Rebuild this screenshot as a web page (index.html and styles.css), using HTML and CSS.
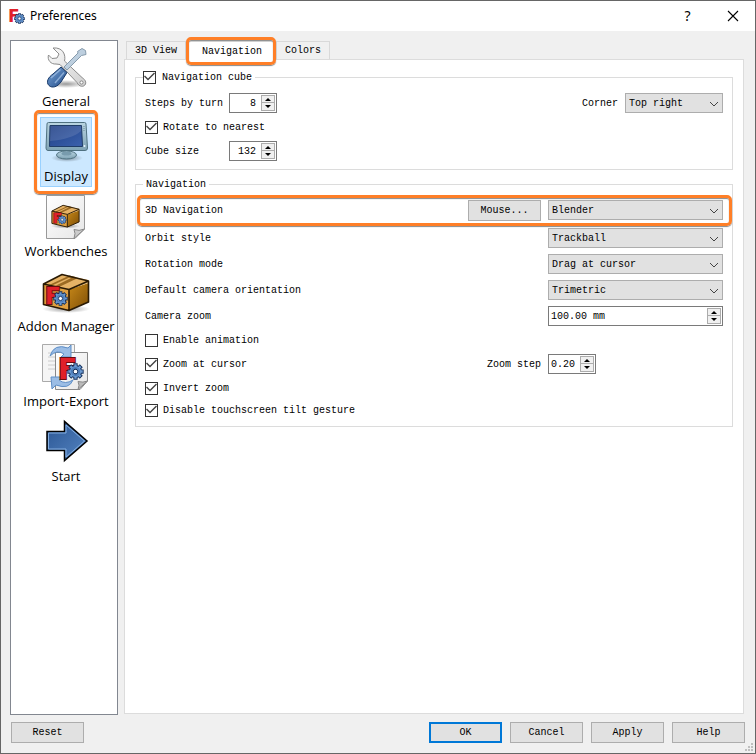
FILE: index.html
```html
<!DOCTYPE html>
<html lang="en">
<head>
<meta charset="utf-8">
<title>Preferences</title>
<link rel="stylesheet" href="styles.css">
</head>
<body>
<svg class="defs" aria-hidden="true">
  <defs>
    <linearGradient id="blue" x1="0" y1="0" x2="1" y2="1"><stop offset="0" stop-color="#7ba6d8"/><stop offset="1" stop-color="#204a87"/></linearGradient>
    <linearGradient id="arrow" x1="0" y1="0" x2="1" y2="1"><stop offset="0" stop-color="#2a5593"/><stop offset="1" stop-color="#5585c2"/></linearGradient>
    <linearGradient id="screen" x1="0" y1="0" x2="1" y2="1"><stop offset="0" stop-color="#1f3f86"/><stop offset="1" stop-color="#3c62ad"/></linearGradient>
    <linearGradient id="steel" x1="0" y1="0" x2="1" y2="1"><stop offset="0" stop-color="#fafafa"/><stop offset="1" stop-color="#cfcfcf"/></linearGradient>
    <linearGradient id="frame" x1="0" y1="0" x2="0" y2="1"><stop offset="0" stop-color="#b9d5e2"/><stop offset="1" stop-color="#7fa3b4"/></linearGradient>
    <linearGradient id="wood" x1="0" y1="0" x2="1" y2="1"><stop offset="0" stop-color="#c98a1a"/><stop offset="1" stop-color="#7d4d05"/></linearGradient>
    <linearGradient id="page" x1="0" y1="0" x2="1" y2="1"><stop offset="0" stop-color="#ffffff"/><stop offset="1" stop-color="#e6e6e6"/></linearGradient>
    <radialGradient id="shade"><stop offset="0" stop-color="#000" stop-opacity=".4"/><stop offset="1" stop-color="#000" stop-opacity="0"/></radialGradient>
    <symbol id="gear" viewBox="-10 -10 20 20">
      <g stroke="#14305c" stroke-width="5"><path d="M0-9.6V9.6M-9.6 0H9.6M-6.8-6.8 6.8 6.8M-6.8 6.8 6.8-6.8"/></g>
      <circle r="7.6" fill="#14305c"/>
      <g stroke="#6c9bd2" stroke-width="2.8"><path d="M0-8.5V8.5M-8.5 0H8.5M-6-6 6 6M-6 6 6-6"/></g>
      <circle r="6.5" fill="#6c9bd2"/><circle r="4.6" fill="none" stroke="#4a7cba" stroke-width="1.6"/>
      <circle r="2.8" fill="#fff" stroke="#14305c" stroke-width="1.2"/>
    </symbol>
    <symbol id="crate" viewBox="0 0 48 40">
      <ellipse cx="24" cy="36" rx="24" ry="4" fill="url(#shade)"/>
      <path d="M1.500 11 27 16.500V37.500L1.500 31.500Z" fill="#e0a040"/>
      <path d="M27 16.500 46.500 10V29L27 37.500Z" fill="url(#wood)"/>
      <path d="M1.500 11 20 1.500 46.500 7V10L27 16.500Z" fill="#e6b366"/>
      <path d="M8 12.500 27.500 3.500 32 4.500 13 14M15 14 34 5" fill="none" stroke="#9b6a22" stroke-width="1.800"/>
      <path d="M1.500 11 20 1.500 46.500 8V29L27 37.500 1.500 31.500ZM1.500 11 27 16.500V37.500M27 16.500 46.500 8" fill="none" stroke="#2a1a04" stroke-width="1.600" stroke-linejoin="round"/>
      <text class="logo-f" x="3" y="31" font-size="23">F</text>
      <use href="#gear" x="11" y="18" width="15" height="15"/>
    </symbol>
  </defs>
</svg>

<header class="titlebar">
  <svg class="app-icon" viewBox="0 0 16 16" aria-hidden="true">
    <text class="logo-f" x="-1" y="14" font-size="17">F</text>
    <use href="#gear" x="5" y="5" width="11" height="11"/>
  </svg>
  <h1>Preferences</h1>
  <button class="caption help" type="button" aria-label="Context help">?</button>
  <button class="caption" type="button" aria-label="Close"><svg viewBox="0 0 12 12" width="12" height="12"><path d="M1 1 11 11M11 1 1 11" stroke="#000" stroke-width="1.100"/></svg></button>
</header>

<main class="content">
  <nav class="sidebar">
    <button class="category" type="button">
      <svg viewBox="0 0 48 48" aria-hidden="true">
        <ellipse cx="24" cy="40" rx="20" ry="4" fill="url(#shade)"/>
        <path d="M11 4 17 10 15 14 10 14.500 6.500 11C5 16 9 20.500 14 20L18 20.500 35 38.500C37 43 42 43.500 43.500 40 44.500 37 42 35 40 33.500L22.500 17C24 11 21 3 11 4Z" fill="url(#steel)" stroke="#8b8b8b"/>
        <circle cx="39.500" cy="38.500" r="1.600" fill="#fff" stroke="#888"/>
        <path d="M22 23 36 9 35.500 7.500 40 4.500 43.500 6.500 44 10.500 39.500 11.500 25 26Z" fill="#bdcfdf" stroke="#879bac"/>
        <path d="M19 23 25 28.500 19 38C15.500 43 10 44.500 7 41.500 3.500 38 6.500 33 11 30Z" fill="url(#blue)" stroke="#173868"/>
        <path d="M18.500 25.500 9 34M22 28.500 13 39" stroke="#a7c5e8" stroke-width="1.500" opacity=".7"/>
      </svg>
      <span>General</span>
    </button>
    <button class="category selected" type="button" aria-current="true">
      <svg viewBox="0 0 48 48" aria-hidden="true">
        <ellipse cx="25" cy="39" rx="16" ry="4" fill="url(#shade)"/>
        <path d="M20 31H29L30 36H19Z" fill="#789bad"/>
        <ellipse cx="24.500" cy="36" rx="10" ry="4" fill="url(#frame)" stroke="#4f7180"/>
        <ellipse cx="24.500" cy="34.500" rx="5" ry="2" fill="#789bad"/>
        <path d="M6.500 3.500H42.500Q44 3.500 44 5L45.500 29Q45.500 31.500 43 31.500H6Q4 31.500 4 29L5 5Q5 3.500 6.500 3.500Z" fill="url(#frame)" stroke="#4f7180"/>
        <path d="M8 6.500H39.500L40.500 27.500H7.500Z" fill="url(#screen)" stroke="#203d68"/>
        <path d="M8.500 7H39V12Q30 20 8 22Z" fill="#fff" opacity=".12"/>
        <path d="M42 7V13" stroke="#6f8c99" stroke-dasharray="1 1"/><circle cx="42.500" cy="27" r="1" fill="#e8f6ff"/>
      </svg>
      <span>Display</span>
    </button>
    <button class="category" type="button">
      <svg viewBox="0 0 48 48" aria-hidden="true">
        <path d="M4.500 1.500H42.500V35L33 44.500H4.500Z" fill="url(#page)" stroke="#999"/>
        <path d="M42.500 35 32 44.500Q34 39 32 35.500 37 37.500 42.500 35Z" fill="#ccc" stroke="#888"/>
        <use href="#crate" x="9" y="10" width="29" height="25"/>
      </svg>
      <span>Workbenches</span>
    </button>
    <button class="category" type="button">
      <svg viewBox="0 0 48 48" aria-hidden="true"><use href="#crate" x="0" y="4" width="48" height="40"/></svg>
      <span>Addon Manager</span>
    </button>
    <button class="category" type="button">
      <svg viewBox="0 0 48 48" aria-hidden="true">
        <path d="M.500.500H32.500V37.500H.500Z" fill="#f5f5f5" stroke="#aaa"/>
        <path d="M6 9H13M6 13H13M6 17H13M6 21H13M6 25H13" stroke="#ccc"/>
        <path d="M13.500 8.500H45.500V37L38 45.500H13.500Z" fill="url(#page)" stroke="#888"/>
        <path d="M45.500 37 36 45.500Q38 41 36 37.500 41 39 45.500 37Z" fill="#bbb" stroke="#888"/>
        <path d="M8 12Q12-1 26 4L29 1V13H19L22 10Q15 5 8 12Z" fill="#9bbde5" stroke="#5f8fc7"/>
        <path d="M9 33H20L17 36Q23 41 31 36Q27 46 14 41L10 45Z" fill="#9bbde5" stroke="#5f8fc7"/>
        <text class="logo-f" x="16" y="35" font-size="28">F</text>
        <use href="#gear" x="25" y="19" width="17" height="17"/>
      </svg>
      <span>Import-Export</span>
    </button>
    <button class="category" type="button">
      <svg viewBox="0 0 48 48" aria-hidden="true">
        <path d="M5 12.500H22.500V2.500L45 22 22.500 41.500V31.500H5Z" fill="url(#arrow)" stroke="#000" stroke-width="1.500"/>
        <path d="M6.500 14H24V6L42.500 22 24 38V30H6.500Z" fill="none" stroke="#84aee0"/>
      </svg>
      <span>Start</span>
    </button>
  </nav>

  <section class="tabs">
    <div class="tablist" role="tablist">
      <button class="tab" type="button" role="tab" aria-selected="false">3D View</button>
      <button class="tab active" type="button" role="tab" aria-selected="true">Navigation</button>
      <button class="tab" type="button" role="tab" aria-selected="false">Colors</button>
    </div>
    <form class="pane" role="tabpanel">
      <fieldset>
        <legend class="check-legend"><label class="check"><input type="checkbox" checked>Navigation cube</label></legend>
        <div class="rows">
          <div class="row split">
            <div class="pair">
              <label class="caption-label" for="steps">Steps by turn</label>
              <div class="spin right"><input id="steps" type="text" value="8"><button type="button" aria-label="Increase steps"></button><button type="button" aria-label="Decrease steps"></button></div>
            </div>
            <div class="pair end">
              <label for="corner">Corner</label>
              <div class="combo corner"><select id="corner"><option>Top right</option></select><svg viewBox="0 0 10 6"><path d="M1 1 5 5 9 1"/></svg></div>
            </div>
          </div>
          <div class="row"><label class="check"><input type="checkbox" checked>Rotate to nearest</label></div>
          <div class="row pair">
            <label class="caption-label" for="cube">Cube size</label>
            <div class="spin right"><input id="cube" type="text" value="132"><button type="button" aria-label="Increase size"></button><button type="button" aria-label="Decrease size"></button></div>
          </div>
        </div>
      </fieldset>

      <fieldset>
        <legend class="text-legend">Navigation</legend>
        <div class="rows">
          <div class="row grid highlighted">
            <label for="style">3D Navigation</label>
            <button class="btn" type="button">Mouse...</button>
            <div class="combo"><select id="style"><option>Blender</option></select><svg viewBox="0 0 10 6"><path d="M1 1 5 5 9 1"/></svg></div>
          </div>
          <div class="selects">
            <div class="row grid">
              <label for="orbit">Orbit style</label>
              <div class="combo"><select id="orbit"><option>Trackball</option></select><svg viewBox="0 0 10 6"><path d="M1 1 5 5 9 1"/></svg></div>
            </div>
            <div class="row grid">
              <label for="rotation">Rotation mode</label>
              <div class="combo"><select id="rotation"><option>Drag at cursor</option></select><svg viewBox="0 0 10 6"><path d="M1 1 5 5 9 1"/></svg></div>
            </div>
            <div class="row grid">
              <label for="camera">Default camera orientation</label>
              <div class="combo"><select id="camera"><option>Trimetric</option></select><svg viewBox="0 0 10 6"><path d="M1 1 5 5 9 1"/></svg></div>
            </div>
            <div class="row grid">
              <label for="zoom">Camera zoom</label>
              <div class="spin wide"><input id="zoom" type="text" value="100.00 mm"><button type="button" aria-label="Increase zoom"></button><button type="button" aria-label="Decrease zoom"></button></div>
            </div>
          </div>
          <div class="row"><label class="check"><input type="checkbox">Enable animation</label></div>
          <div class="row grid">
            <label class="check"><input type="checkbox" checked>Zoom at cursor</label>
            <label for="step">Zoom step</label>
            <div class="spin"><input id="step" type="text" value="0.20"><button type="button" aria-label="Increase step"></button><button type="button" aria-label="Decrease step"></button></div>
          </div>
          <div class="row"><label class="check"><input type="checkbox" checked>Invert zoom</label></div>
          <div class="row short"><label class="check"><input type="checkbox" checked>Disable touchscreen tilt gesture</label></div>
        </div>
      </fieldset>
    </form>
  </section>
</main>

<footer class="actions">
  <button class="btn reset" type="button">Reset</button>
  <button class="btn default" type="button">OK</button>
  <button class="btn" type="button">Cancel</button>
  <button class="btn" type="button">Apply</button>
  <button class="btn" type="button">Help</button>
  <svg class="grip" viewBox="0 0 8 8" aria-hidden="true"><path d="M6 0h2v2H6zM3 3h2v2H3zM6 3h2v2H6zM0 6h2v2H0zM3 6h2v2H3zM6 6h2v2H6z" fill="#bfbfbf"/></svg>
</footer>
</body>
</html>
```
FILE: styles.css
```css
* { box-sizing: border-box; }

body {
  margin: 0;
  min-height: 100vh;
  display: flex;
  flex-direction: column;
  position: relative;
  border: 1px solid #666;
  background: #f0f0f0;
  color: #000;
  font: 10px/15px "Liberation Mono", monospace;
}

button, input, select { font: inherit; color: inherit; margin: 0; }
button { padding: 0; }

.defs { position: absolute; width: 0; height: 0; }

.logo-f {
  font-family: "DejaVu Sans", sans-serif;
  font-weight: bold;
  fill: #e0202a;
  stroke: #6b0a0d;
  stroke-width: 2px;
  paint-order: stroke;
}

/* Title bar */
.titlebar {
  display: flex;
  align-items: center;
  height: 30px;
  padding-left: 8px;
  background: #fff;
  font: 12px/16px "Noto Sans", sans-serif;
}
.app-icon { width: 16px; height: 16px; margin-right: 5px; overflow: visible; }
.app-icon .logo-f { stroke-width: 0; }
.titlebar h1 { flex: 1; margin: 0; font: inherit; }
.caption {
  width: 45px;
  height: 30px;
  display: grid;
  place-items: center;
  border: 0;
  background: none;
}
.help { font-size: 14px; }

/* Main area */
.content {
  flex: 1;
  display: flex;
  gap: 6px;
  padding: 9px 11px 0 9px;
}

.sidebar {
  width: 108px;
  flex: none;
  display: flex;
  flex-direction: column;
  align-items: center;
  gap: 5px;
  padding: 1px 0 0 4px;
  border: 1px solid #828790;
  background: #fff;
  font: 13px/18px "Open Sans", sans-serif;
}
.category {
  position: relative;
  display: flex;
  flex-direction: column;
  align-items: center;
  height: 70px;
  min-width: 52px;
  padding: 1px 0 0;
  border: 1px solid transparent;
  background: none;
  white-space: nowrap;
}
.category svg { width: 48px; height: 48px; }
.category.selected { background: #cce8ff; border-color: #99d1ff; }

/* Orange callout frames */
.category.selected::after,
.tab.active::after,
.highlighted::after {
  content: "";
  position: absolute;
  border: 3px solid #ff7f27;
  border-radius: 5px;
  box-shadow: 0 1px 1px #888, inset 0 1px 1px #888;
  pointer-events: none;
}
.category.selected::after { inset: -8px -7px; }
.tab.active::after { inset: -5px 0 -5px -2px; }
.highlighted::after { inset: -5px -9px -5px -8px; }

/* Tabs */
.tabs { flex: 1; min-width: 0; display: flex; flex-direction: column; }
.tablist { display: flex; align-items: flex-end; padding: 1px 2px 0; }
.tab {
  height: 18px;
  padding: 0 8px;
  border: 1px solid #d9d9d9;
  border-bottom: 0;
  background: #f0f0f0;
}
.tab.active {
  position: relative;
  z-index: 1;
  height: 19px;
  padding: 0 14px;
  margin: 0 -1px -1px 1px;
  background: #fff;
}
.pane {
  flex: 1;
  display: flex;
  flex-direction: column;
  gap: 7px;
  padding: 10px;
  margin-bottom: 1px;
  border: 1px solid #dcdcdc;
  background: #fff;
}

/* Group boxes */
fieldset {
  min-width: 0;
  margin: 0;
  padding: 0 7px;
  border: 1px solid #dcdcdc;
}
legend { height: 14px; padding: 0 3px 0 0; }
.text-legend { padding-left: 3px; }
.rows {
  display: flex;
  flex-direction: column;
  gap: 4px;
  padding: 9px 2px 8px;
}
.row { display: flex; align-items: center; height: 20px; }
.short { height: 16px; }
.split { justify-content: space-between; }
.pair { display: flex; align-items: center; }
.end { gap: 7px; }
.caption-label { width: 84px; }
.grid {
  display: grid;
  grid-template-columns: 1fr auto 175px;
  column-gap: 7px;
}
.grid > :last-child { grid-column: 3; }
.highlighted { position: relative; height: 21px; margin-bottom: 3px; }
.highlighted .combo { align-self: start; }
.selects { display: flex; flex-direction: column; gap: 6px; }

/* Controls */
.check { display: flex; align-items: center; gap: 5px; }
.check input {
  appearance: none;
  position: relative;
  width: 13px;
  height: 13px;
  border: 1px solid #333;
  background: #fff;
}
.check-legend .check { gap: 6px; height: 14px; }
.check input:checked::after {
  content: "";
  position: absolute;
  inset: 0;
  background: #444;
  clip-path: polygon(0 5px, 1px 4px, 4px 7px, 10px 1px, 11px 2px, 4px 9px);
}

.combo { position: relative; height: 20px; }
.combo.corner { width: 98px; }
.combo select {
  appearance: none;
  display: block;
  width: 100%;
  height: 100%;
  padding: 0 20px 0 3px;
  border: 1px solid #adadad;
  border-radius: 0;
  background: #e1e1e1;
}
.combo svg {
  position: absolute;
  right: 4px;
  top: 8px;
  width: 10px;
  height: 6px;
  fill: none;
  stroke: #444;
  pointer-events: none;
}

.spin {
  display: grid;
  grid-template: 1fr 1fr / 1fr 14px;
  width: 48px;
  height: 20px;
  padding: 1px;
  border: 1px solid #7a7a7a;
  background: #fff;
}
.spin.wide { width: auto; }
.spin input {
  grid-row: 1 / 3;
  min-width: 0;
  padding: 0 0 0 1px;
  border: 0;
  outline: 0;
  background: none;
}
.spin.right input { padding-right: 5px; text-align: right; }
.spin button {
  display: grid;
  place-items: center;
  border: 1px solid #acacac;
  background: #f0f0f0;
}
.spin button + button { border-top: 0; }
.spin button::before {
  content: "";
  border: solid transparent;
  border-width: 0 3px 3px;
  border-bottom-color: #000;
}
.spin button + button::before {
  border-width: 3px 3px 0;
  border-top-color: #000;
}

.btn {
  width: 73px;
  height: 21px;
  border: 1px solid #adadad;
  background: #e1e1e1;
}
.btn.default { border: 2px solid #0078d7; }

/* Footer */
.actions {
  display: flex;
  gap: 8px;
  padding: 7px 10px 10px;
}
.reset { margin-right: auto; }
.grip { position: absolute; right: 2px; bottom: 2px; width: 8px; height: 8px; }
```
